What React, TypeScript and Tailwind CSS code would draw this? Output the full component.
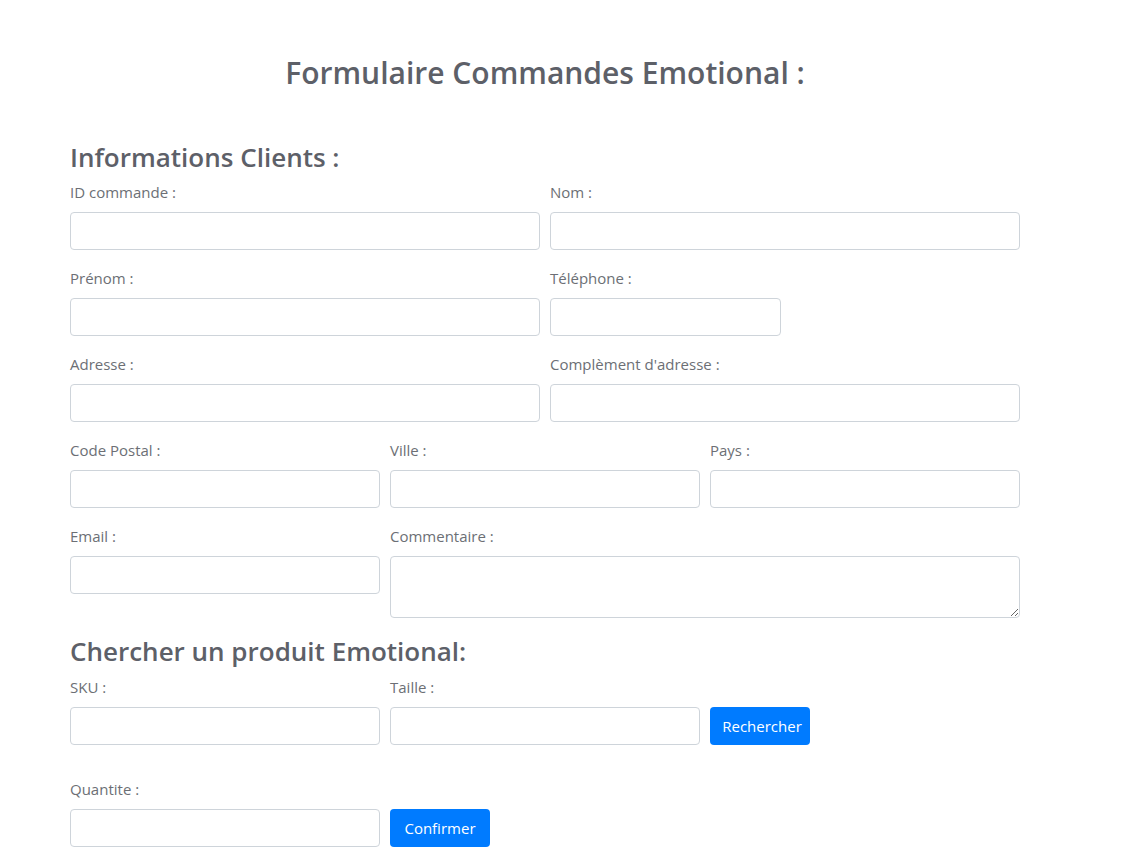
import React from "react";

const font = { fontFamily: '"Open Sans", "Noto Sans", sans-serif' };

function Field({ label, className = "", tall = false, inputClass = "w-full" }: { label: string; className?: string; tall?: boolean; inputClass?: string }) {
  return (
    <div className={"flex flex-col " + className}>
      <label className="text-[15px] leading-[24px] text-[#6c6f75] mb-2 h-6">{label}</label>
      {tall ? (
        <textarea className="w-full h-[62px] border border-[#ced4da] rounded-[4px] bg-white resize-y outline-none" />
      ) : (
        <input className={"h-[38px] border border-[#ced4da] rounded-[4px] bg-white outline-none " + inputClass} />
      )}
    </div>
  );
}

export default function App() {
  return (
    <div className="min-h-[857px] bg-white" style={font}>
      <div className="ml-[70px] w-[950px] pt-[54px]">
        <h2 className="text-center text-[30px] leading-[38px] font-semibold text-[#5d6068]">Formulaire Commandes Emotional :</h2>
        <h3 className="mt-[48px] text-[26px] leading-[34px] font-semibold text-[#5d6068] mb-[6px]">Informations Clients :</h3>
        <div className="flex flex-col gap-4">
          <div className="flex gap-[10px]">
            <Field label="ID commande :" className="w-[470px]" />
            <Field label="Nom :" className="w-[470px]" />
          </div>
          <div className="flex gap-[10px]">
            <Field label="Prénom :" className="w-[470px]" />
            <Field label="Téléphone :" className="w-[470px]" inputClass="w-[231px]" />
          </div>
          <div className="flex gap-[10px]">
            <Field label="Adresse :" className="w-[470px]" />
            <Field label="Complèment d'adresse :" className="w-[470px]" />
          </div>
          <div className="flex gap-[10px]">
            <Field label="Code Postal :" className="w-[310px]" />
            <Field label="Ville :" className="w-[310px]" />
            <Field label="Pays :" className="w-[310px]" />
          </div>
          <div className="flex gap-[10px]">
            <Field label="Email :" className="w-[310px]" />
            <Field label="Commentaire :" className="w-[630px]" tall />
          </div>
        </div>
        <h3 className="mt-4 text-[26px] leading-[34px] font-semibold text-[#5d6068] mb-[7px]">Chercher un produit Emotional:</h3>
        <div className="flex gap-[10px] items-end">
          <Field label="SKU :" className="w-[310px]" />
          <Field label="Taille :" className="w-[310px]" />
          <button className="h-[38px] w-[100px] rounded-[4px] bg-[#007bff] text-white text-[15px] pl-[4px]">Rechercher</button>
        </div>
        <div className="flex gap-[10px] items-end mt-8">
          <Field label="Quantite :" className="w-[310px]" />
          <button className="h-[38px] w-[100px] rounded-[4px] bg-[#007bff] text-white text-[15px]">Confirmer</button>
        </div>
      </div>
    </div>
  );
}
